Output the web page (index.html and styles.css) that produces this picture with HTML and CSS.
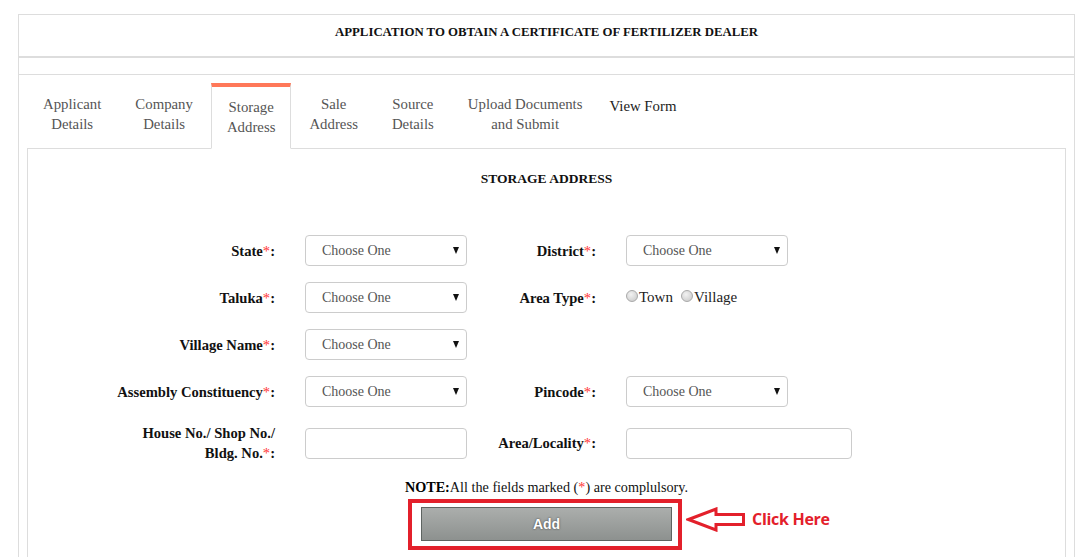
FILE: index.html
```html
<!DOCTYPE html>
<html>
<head>
<meta charset="utf-8">
<link rel="stylesheet" href="styles.css">
</head>
<body>
<div class="card">
  <div class="card-title">APPLICATION TO OBTAIN A CERTIFICATE OF FERTILIZER DEALER</div>
  <div class="card-strip"></div>
  <div class="card-body">
    <ul class="tabs">
      <li class="tab">Applicant<br>Details</li>
      <li class="tab">Company<br>Details</li>
      <li class="tab active">Storage<br>Address</li>
      <li class="tab">Sale<br>Address</li>
      <li class="tab">Source<br>Details</li>
      <li class="tab">Upload Documents<br>and Submit</li>
      <li class="tab dark">View Form</li>
    </ul>
    <div class="panel">
      <h2 class="panel-title">STORAGE ADDRESS</h2>
      <div class="form-grid">
        <label class="lbl">State<span class="req">*</span>:</label>
        <div class="select"><span>Choose One</span><i class="caret"></i></div>
        <label class="lbl lbl2">District<span class="req">*</span>:</label>
        <div class="select"><span>Choose One</span><i class="caret"></i></div>

        <label class="lbl">Taluka<span class="req">*</span>:</label>
        <div class="select"><span>Choose One</span><i class="caret"></i></div>
        <label class="lbl lbl2">Area Type<span class="req">*</span>:</label>
        <div class="radios">
          <span class="radio"><i class="dot"></i>Town</span>
          <span class="radio"><i class="dot"></i>Village</span>
        </div>

        <label class="lbl">Village Name<span class="req">*</span>:</label>
        <div class="select"><span>Choose One</span><i class="caret"></i></div>
        <div class="empty"></div>
        <div class="empty"></div>

        <label class="lbl">Assembly Constituency<span class="req">*</span>:</label>
        <div class="select"><span>Choose One</span><i class="caret"></i></div>
        <label class="lbl lbl2">Pincode<span class="req">*</span>:</label>
        <div class="select"><span>Choose One</span><i class="caret"></i></div>

        <label class="lbl">House No./ Shop No./<br>Bldg. No.<span class="req">*</span>:</label>
        <div class="input"></div>
        <label class="lbl lbl2">Area/Locality<span class="req">*</span>:</label>
        <div class="input wide"></div>
      </div>
      <p class="note"><b>NOTE:</b>All the fields marked (<span class="req">*</span>) are complulsory.</p>
      <div class="actions">
        <div class="highlight">
          <button class="btn-add" type="button">Add</button>
          <div class="annotation">
            <svg class="arrow" width="60" height="25" viewBox="0 0 60 25">
              <polygon points="2.5,12.5 30,2 30,7.5 57.5,7.5 57.5,17.5 30,17.5 30,23" fill="none" stroke="#e3202b" stroke-width="3" stroke-linejoin="miter"/>
            </svg>
            <span class="click">Click Here</span>
          </div>
        </div>
      </div>
    </div>
  </div>
</div>
</body>
</html>
```

FILE: styles.css
```css
* { box-sizing: border-box; }
html, body { margin: 0; padding: 0; background: #fff; }
body {
  font-family: "Liberation Serif", "Times New Roman", serif;
  color: #222;
  padding: 14px 17px 0 18px;
  height: 557px;
  overflow: hidden;
}
.card {
  border: 1px solid #ddd;
  border-bottom: none;
  height: 543px;
}
.card-title {
  height: 43px;
  border-bottom: 2px solid #ddd;
  text-align: center;
  font-weight: bold;
  font-size: 12.8px;
  line-height: 34px;
  color: #111;
}
.card-strip {
  height: 17px;
  border-bottom: 1px solid #ddd;
}
.card-body {
  padding: 8px 8px 0 8px;
}
.tabs {
  list-style: none;
  margin: 0;
  padding: 0;
  display: flex;
  align-items: stretch;
  position: relative;
  z-index: 1;
}
.tab {
  margin-right: 2px;
  padding: 10px 15px 13px;
  border: 1px solid transparent;
  font-size: 14.8px;
  line-height: 20px;
  color: #555;
  text-align: center;
  white-space: nowrap;
}
.tab.active {
  border-color: #ddd;
  border-top: 4px solid #ff7859;
  border-bottom: 1px solid #fff;
  margin-bottom: -1px;
  padding-bottom: 10px;
  background: #fff;
}
.tab.dark {
  color: #222;
  padding-top: 12px;
  padding-left: 8px;
}
.panel {
  border: 1px solid #ddd;
  border-bottom: none;
  height: 409px;
}
.panel-title {
  margin: 0;
  padding-top: 21px;
  font-size: 13.5px;
  line-height: 18px;
  text-align: center;
  font-weight: bold;
  color: #111;
}
.form-grid {
  margin: 47px 0 0 82px;
  display: grid;
  grid-template-columns: 195px 162px 159px 226px;
  row-gap: 16px;
  align-items: center;
}
.lbl {
  text-align: right;
  padding-right: 30px;
  font-weight: bold;
  font-size: 14.6px;
  line-height: 20px;
  color: #111;
}
.req { color: #f33; font-weight: normal; }
.select, .input {
  height: 31px;
  width: 162px;
  border: 1px solid #ccc;
  border-radius: 4px;
  background: #fff;
}
.select {
  display: flex;
  align-items: center;
  justify-content: space-between;
  padding: 0 7px 0 16px;
  font-size: 14px;
  color: #555;
}
.caret {
  width: 0;
  height: 0;
  border-left: 3.5px solid transparent;
  border-right: 3.5px solid transparent;
  border-top: 7px solid #111;
}
.input.wide { width: 226px; }
.radios {
  display: flex;
  align-items: center;
  font-size: 15px;
  color: #222;
}
.radio {
  display: inline-flex;
  align-items: center;
  margin-right: 8px;
}
.dot {
  width: 12px;
  height: 12px;
  border-radius: 50%;
  border: 1px solid #a9a9a9;
  background: radial-gradient(circle at 40% 35%, #f2f2f2, #c6c6c6);
  margin-top: -4px;
  margin-right: 1px;
}
.empty { height: 31px; }
.note {
  margin: 14px 0 0;
  text-align: center;
  font-size: 14.2px;
  line-height: 20px;
  color: #111;
}
.note b { color: #000; }
.actions {
  display: flex;
  justify-content: center;
  margin-top: 2px;
}
.highlight {
  position: relative;
  margin-left: -3px;
  border: 4px solid #e3202b;
  padding: 4px 6px 5px 9px;
}
.btn-add {
  display: block;
  width: 251px;
  height: 34px;
  border: 1px solid #5e6461;
  background: linear-gradient(#abaeac, #8d918f);
  color: #fff;
  font-family: "Liberation Sans", Arial, sans-serif;
  font-weight: bold;
  font-size: 14px;
  text-shadow: 0 0 2px #333;
  padding: 0;
}
.annotation {
  position: absolute;
  left: calc(100% + 8px);
  top: 4px;
  display: flex;
  align-items: center;
  white-space: nowrap;
}
.arrow { display: block; }
.click {
  margin-left: 6px;
  margin-top: -1px;
  color: #e3202b;
  font-family: "Open Sans", "Liberation Sans", sans-serif;
  font-weight: bold;
  font-size: 16px;
  letter-spacing: -0.3px;
}
```
